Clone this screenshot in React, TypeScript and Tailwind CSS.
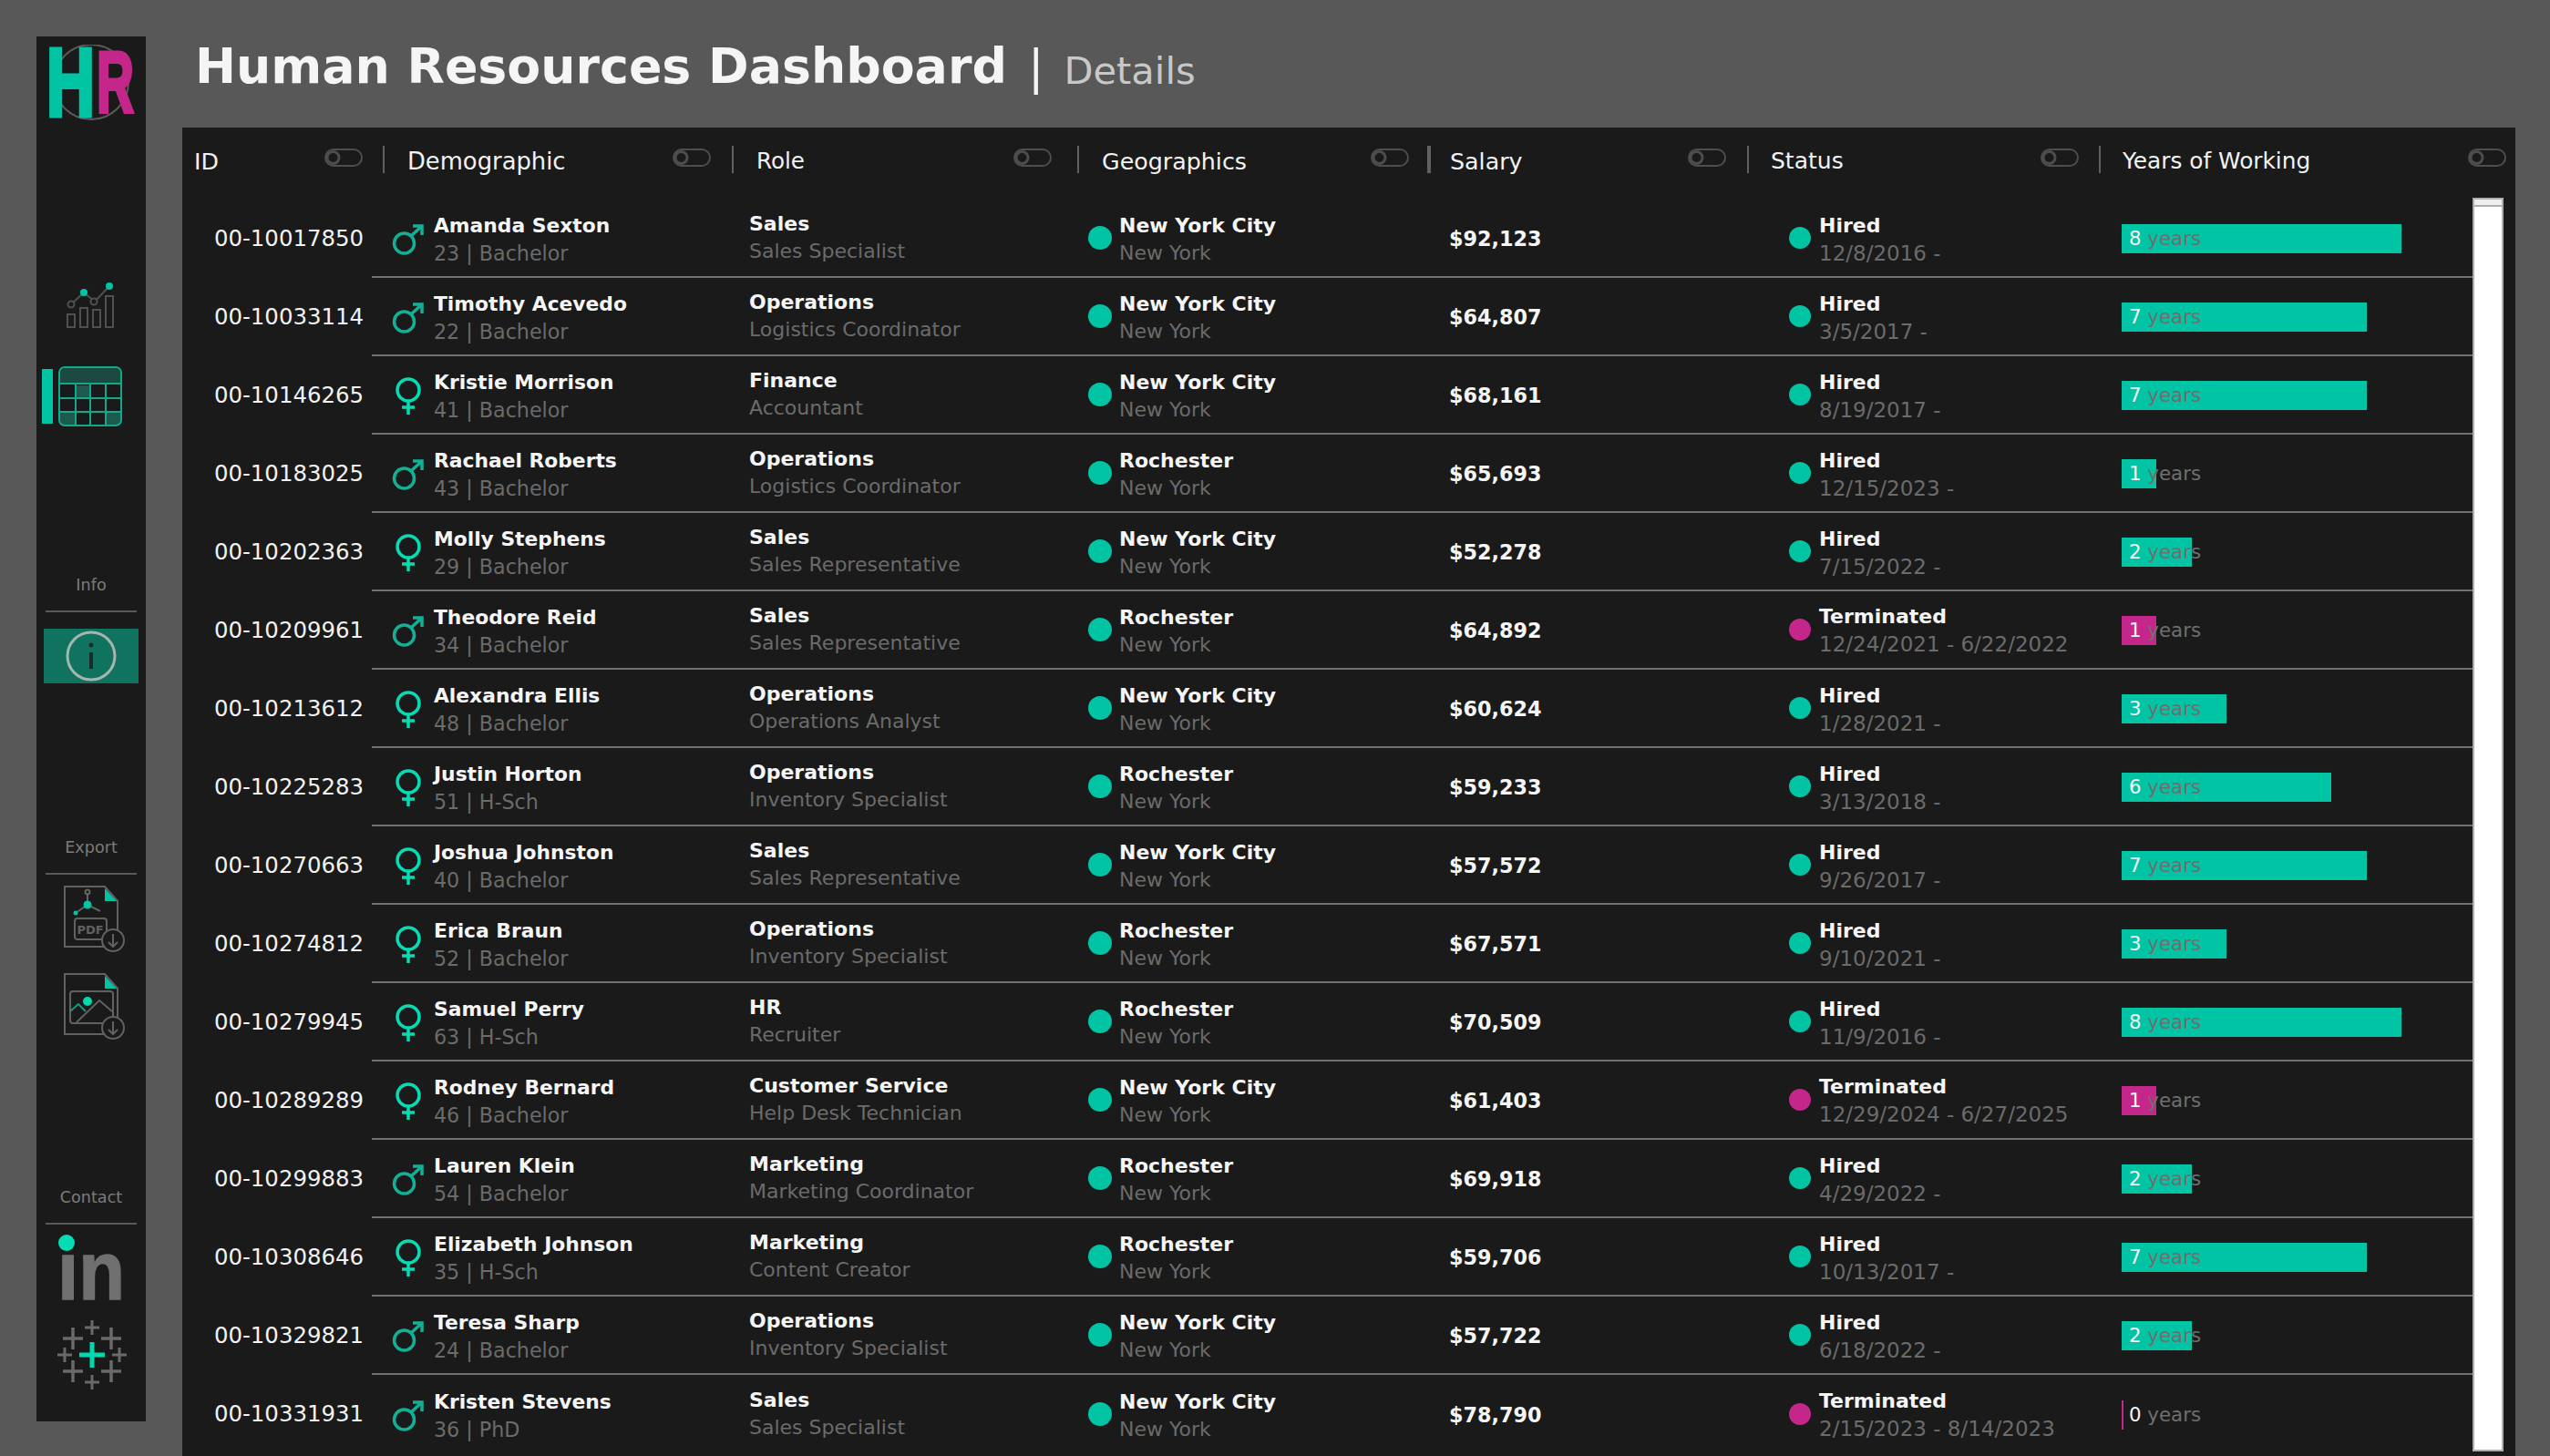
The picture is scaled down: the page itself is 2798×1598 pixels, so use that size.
import React from "react";

type Person = {
  id: string;
  name: string;
  male: boolean;
  age: number;
  edu: string;
  dept: string;
  role: string;
  city: string;
  salary: string;
  status: "Hired" | "Terminated";
  dates: string;
  years: number;
};

const people: Person[] = [
  { id: "00-10017850", name: "Amanda Sexton", male: true, age: 23, edu: "Bachelor", dept: "Sales", role: "Sales Specialist", city: "New York City", salary: "$92,123", status: "Hired", dates: "12/8/2016 -", years: 8 },
  { id: "00-10033114", name: "Timothy Acevedo", male: true, age: 22, edu: "Bachelor", dept: "Operations", role: "Logistics Coordinator", city: "New York City", salary: "$64,807", status: "Hired", dates: "3/5/2017 -", years: 7 },
  { id: "00-10146265", name: "Kristie Morrison", male: false, age: 41, edu: "Bachelor", dept: "Finance", role: "Accountant", city: "New York City", salary: "$68,161", status: "Hired", dates: "8/19/2017 -", years: 7 },
  { id: "00-10183025", name: "Rachael Roberts", male: true, age: 43, edu: "Bachelor", dept: "Operations", role: "Logistics Coordinator", city: "Rochester", salary: "$65,693", status: "Hired", dates: "12/15/2023 -", years: 1 },
  { id: "00-10202363", name: "Molly Stephens", male: false, age: 29, edu: "Bachelor", dept: "Sales", role: "Sales Representative", city: "New York City", salary: "$52,278", status: "Hired", dates: "7/15/2022 -", years: 2 },
  { id: "00-10209961", name: "Theodore Reid", male: true, age: 34, edu: "Bachelor", dept: "Sales", role: "Sales Representative", city: "Rochester", salary: "$64,892", status: "Terminated", dates: "12/24/2021 - 6/22/2022", years: 1 },
  { id: "00-10213612", name: "Alexandra Ellis", male: false, age: 48, edu: "Bachelor", dept: "Operations", role: "Operations Analyst", city: "New York City", salary: "$60,624", status: "Hired", dates: "1/28/2021 -", years: 3 },
  { id: "00-10225283", name: "Justin Horton", male: false, age: 51, edu: "H-Sch", dept: "Operations", role: "Inventory Specialist", city: "Rochester", salary: "$59,233", status: "Hired", dates: "3/13/2018 -", years: 6 },
  { id: "00-10270663", name: "Joshua Johnston", male: false, age: 40, edu: "Bachelor", dept: "Sales", role: "Sales Representative", city: "New York City", salary: "$57,572", status: "Hired", dates: "9/26/2017 -", years: 7 },
  { id: "00-10274812", name: "Erica Braun", male: false, age: 52, edu: "Bachelor", dept: "Operations", role: "Inventory Specialist", city: "Rochester", salary: "$67,571", status: "Hired", dates: "9/10/2021 -", years: 3 },
  { id: "00-10279945", name: "Samuel Perry", male: false, age: 63, edu: "H-Sch", dept: "HR", role: "Recruiter", city: "Rochester", salary: "$70,509", status: "Hired", dates: "11/9/2016 -", years: 8 },
  { id: "00-10289289", name: "Rodney Bernard", male: false, age: 46, edu: "Bachelor", dept: "Customer Service", role: "Help Desk Technician", city: "New York City", salary: "$61,403", status: "Terminated", dates: "12/29/2024 - 6/27/2025", years: 1 },
  { id: "00-10299883", name: "Lauren Klein", male: true, age: 54, edu: "Bachelor", dept: "Marketing", role: "Marketing Coordinator", city: "Rochester", salary: "$69,918", status: "Hired", dates: "4/29/2022 -", years: 2 },
  { id: "00-10308646", name: "Elizabeth Johnson", male: false, age: 35, edu: "H-Sch", dept: "Marketing", role: "Content Creator", city: "Rochester", salary: "$59,706", status: "Hired", dates: "10/13/2017 -", years: 7 },
  { id: "00-10329821", name: "Teresa Sharp", male: true, age: 24, edu: "Bachelor", dept: "Operations", role: "Inventory Specialist", city: "New York City", salary: "$57,722", status: "Hired", dates: "6/18/2022 -", years: 2 },
  { id: "00-10331931", name: "Kristen Stevens", male: true, age: 36, edu: "PhD", dept: "Sales", role: "Sales Specialist", city: "New York City", salary: "$78,790", status: "Terminated", dates: "2/15/2023 - 8/14/2023", years: 0 },
];

const headers = [
  { label: "ID", cell: "w-[220px] pl-[13px] pr-[22px]", line: "", text: "text-[25.33px]" },
  { label: "Demographic", cell: "w-[383px] pl-[25px] pr-[23px]", line: "border-l-2", text: "text-[25.8px]" },
  { label: "Role", cell: "w-[379px] pl-[25px] pr-[28px]", line: "border-l-2", text: "text-[24.6px]" },
  { label: "Geographics", cell: "w-[384px] pl-[25px] pr-[20px]", line: "border-l-2", text: "text-[25.33px]" },
  { label: "Salary", cell: "w-[351px] pl-[21px] pr-[23px]", line: "border-l-4", text: "text-[25.33px]" },
  { label: "Status", cell: "w-[386px] pl-[24px] pr-[22px]", line: "border-l-2", text: "text-[25px]" },
  { label: "Years of Working", cell: "w-[457px] pl-[24px] pr-[10px]", line: "border-l-2", text: "text-[24.8px]" },
];

const Toggle = () => (
  <svg width="42" height="20" viewBox="0 0 42 20" className="mb-[4px] shrink-0" fill="none">
    <rect x="1" y="1" width="40" height="18" rx="9" stroke="#4d4d4d" strokeWidth="2" />
    <circle cx="9.5" cy="10" r="6.5" stroke="#4d4d4d" strokeWidth="3" />
  </svg>
);

const GenderIcon = ({ male }: { male: boolean }) =>
  male ? (
    <svg width="36" height="36" viewBox="0 0 36 36" fill="none" stroke="#13b096" strokeWidth="3.5" className="mt-[4px]">
      <circle cx="13.5" cy="22" r="11" />
      <path d="M21 14 L33 3 M23 3 H33 V13" />
    </svg>
  ) : (
    <svg width="30" height="42" viewBox="0 0 30 42" fill="none" stroke="#06dcb4" strokeWidth="3.5" className="ml-[3px] mt-[4px]">
      <circle cx="15" cy="14" r="12" />
      <path d="M15 26 V41 M8 33 H22" />
    </svg>
  );

const Row = ({ p, last }: { p: Person; last: boolean }) => {
  const bar = p.status === "Hired" ? "bg-[#00c4a3]" : "bg-[#c4268a]";
  return (
    <div className="flex h-[86px]">
      <div className="w-[199px] flex items-center justify-end pt-px text-[24.4px] text-[#f2f2f2]">{p.id}</div>
      <div className="w-[9px]" />
      <div className={`flex flex-1 items-center ${last ? "" : "border-b-2 border-[#707070]"}`}>
        <div className="flex items-center w-[414px] pl-[22px] gap-[10px]">
          <div className="w-[36px]">
            <GenderIcon male={p.male} />
          </div>
          <div className="pt-[4px]">
            <div className="text-[21.8px] leading-[30px] font-bold text-[#f5f5f5]">{p.name}</div>
            <div className="text-[22.2px] leading-[30px] text-[#6b6b6b]">
              {p.age} | {p.edu}
            </div>
          </div>
        </div>
        <div className="w-[372px]">
          <div className="text-[22px] leading-[30px] font-bold text-[#f5f5f5]">{p.dept}</div>
          <div className="text-[22px] leading-[30px] text-[#6b6b6b]">{p.role}</div>
        </div>
        <div className="flex items-center w-[396px] gap-[8px]">
          <div className="size-[26px] rounded-full bg-[#00c4a3]" />
          <div className="pt-[4px]">
            <div className="text-[22px] leading-[30px] font-bold text-[#f5f5f5]">{p.city}</div>
            <div className="text-[22px] leading-[30px] text-[#6b6b6b]">New York</div>
          </div>
        </div>
        <div className="w-[373px] pt-[3px] text-[22.3px] font-bold text-[#f5f5f5]">{p.salary}</div>
        <div className="flex items-center w-[365px] gap-[9px]">
          <div className={`size-[24px] rounded-full ${bar}`} />
          <div className={p.status === "Hired" ? "pt-[4px]" : "pt-[2px]"}>
            <div className="text-[22px] leading-[30px] font-bold text-[#f5f5f5]">{p.status}</div>
            <div className="text-[23px] leading-[30px] text-[#6b6b6b]">{p.dates}</div>
          </div>
        </div>
        <div className={`mt-[2px] h-8 ${bar}`} style={{ width: p.years === 0 ? 2 : Math.round(p.years * 38.4) }}>
          <div className="w-0 pl-[8px] whitespace-nowrap text-[21.33px] leading-[32px] text-[#6f6f6f]">
            <span className="text-[#f5f5f5]">{p.years}</span> years
          </div>
        </div>
      </div>
    </div>
  );
};

const Logo = () => (
  <svg width="100" height="84" viewBox="0 0 100 84" className="ml-[10px] mt-[9px]">
    <circle cx="50" cy="41" r="41" fill="none" stroke="#5a5a5a" strokeWidth="2" />
    <text x="1" y="78" fontFamily="Liberation Sans" fontWeight="700" fontSize="106" fill="#00c4a3" stroke="#00c4a3" strokeWidth="5" textLength="53" lengthAdjust="spacingAndGlyphs">
      H
    </text>
    <text x="56" y="74" fontFamily="Liberation Sans" fontWeight="700" fontSize="94" fill="#c4268a" stroke="#c4268a" strokeWidth="4" textLength="41" lengthAdjust="spacingAndGlyphs">
      R
    </text>
  </svg>
);

const ChartIcon = () => (
  <svg width="54" height="50" viewBox="0 0 54 50" fill="none" className="ml-[32px] mt-[177px]">
    <g stroke="#505050" strokeWidth="2">
      <path d="M2 49 V35 H10 V49 Z M16 49 V28 H24 V49 Z M30 49 V30 H38 V49 Z M44 49 V15 H52 V49 Z" />
      <path d="M6 24 L20 11 L32 21 L48 4" />
      <circle cx="6" cy="24" r="3.5" fill="#1a1a1a" />
      <circle cx="31" cy="21" r="3.5" fill="#1a1a1a" />
    </g>
    <circle cx="20" cy="11" r="4" fill="#00c4a3" />
    <circle cx="48" cy="4" r="4" fill="#00c4a3" />
  </svg>
);

const TableIcon = () => (
  <div className="flex items-center mt-[42px] ml-[6px] gap-[6px]">
    <div className="w-3 h-[60px] bg-[#00c4a3]" />
    <svg width="70" height="66" viewBox="0 0 70 66" fill="none">
      <path d="M2 18 V7 a5 5 0 0 1 5 -5 H63 a5 5 0 0 1 5 5 V18 Z" fill="#1c4a41" />
      <rect x="20" y="21" width="14" height="14" fill="#1d5a4d" />
      <rect x="2" y="50" width="17" height="14" fill="#1d5a4d" />
      <rect x="52" y="50" width="16" height="14" fill="#1d5a4d" />
      <rect x="1" y="1" width="68" height="64" rx="6" stroke="#12a88c" strokeWidth="2" />
      <path d="M1 19 H69 M1 35 H69 M1 50 H69 M19 19 V65 M35 19 V65 M52 19 V65" stroke="#12a88c" strokeWidth="2" />
    </svg>
  </div>
);

const SideLabel = ({ text, mt }: { text: string; mt: string }) => (
  <div className={mt}>
    <div className="text-center text-[17.6px] leading-[20px] text-[#7c7c7c]">{text}</div>
    <div className="mx-[10px] mt-[18px] h-[2px] bg-[#585858]" />
  </div>
);

const PdfIcon = () => (
  <svg width="70" height="76" viewBox="0 0 70 76" fill="none" className="ml-[28px] mt-[10px]" stroke="#616161" strokeWidth="2">
    <path d="M3 3 H47 L61 19 V69 H3 Z" />
    <path d="M47 5 L60 19 H47 Z" fill="#00c4a3" stroke="none" />
    <path d="M28 10 V23 M28 23 L15 32 M28 23 L42 30" />
    <circle cx="28" cy="9" r="2.5" />
    <circle cx="28" cy="23" r="4.5" fill="#00c4a3" stroke="none" />
    <circle cx="15" cy="32" r="2.5" fill="#00c4a3" stroke="none" />
    <rect x="14" y="38" width="35" height="23" rx="3" fill="#1a1a1a" />
    <text x="31" y="55" textAnchor="middle" fontFamily="DejaVu Sans" fontWeight="700" fontSize="13" fill="#616161" stroke="none">
      PDF
    </text>
    <circle cx="56" cy="62" r="12" fill="#1a1a1a" />
    <path d="M56 55 V69 M51 64 L56 69 L61 64" />
  </svg>
);

const ImageIcon = () => (
  <svg width="70" height="76" viewBox="0 0 70 76" fill="none" className="ml-[28px] mt-[20px]" stroke="#616161" strokeWidth="2">
    <path d="M3 3 H47 L61 19 V69 H3 Z" />
    <path d="M47 5 L60 19 H47 Z" fill="#00c4a3" stroke="none" />
    <rect x="9" y="22" width="47" height="35" rx="3" fill="#1a1a1a" />
    <path d="M16 56 L41 32 L55 44" />
    <path d="M9 44 L18 36 L26 44" stroke="#109c84" />
    <circle cx="28" cy="33" r="5" fill="#00d9ae" stroke="none" />
    <circle cx="56" cy="62" r="12" fill="#1a1a1a" />
    <path d="M56 55 V69 M51 64 L56 69 L61 64" />
  </svg>
);

const LinkedIn = () => (
  <svg width="78" height="76" viewBox="0 0 78 76" className="ml-[22px] mt-[10px]">
    <circle cx="11" cy="10" r="9" fill="#06dcb4" />
    <text x="1" y="72" fontFamily="Liberation Sans" fontWeight="700" fontSize="90" fill="#707070" stroke="#707070" strokeWidth="1.5" textLength="74" lengthAdjust="spacingAndGlyphs">
      ın
    </text>
  </svg>
);

const TableauMark = () => (
  <svg width="78" height="78" viewBox="0 0 78 78" fill="none" stroke="#6a6a6a" strokeWidth="3" className="ml-[22px] mt-[18px]">
    <path d="M39 1 V17 M31 9 H47 M39 61 V77 M31 69 H47 M9 31 V47 M1 39 H17 M69 31 V47 M61 39 H77" />
    <path d="M18 9 V33 M7 21 H29 M60 9 V33 M49 21 H71 M18 45 V69 M7 57 H29 M60 45 V69 M49 57 H71" strokeWidth="3.5" />
    <path d="M39 25 V53 M25 39 H53" stroke="#00d9ae" strokeWidth="5" />
  </svg>
);

const Sidebar = () => (
  <div className="ml-10 mt-10 w-[120px] h-[1520px] bg-[#1a1a1a] shrink-0">
    <Logo />
    <ChartIcon />
    <TableIcon />
    <SideLabel text="Info" mt="mt-[164px]" />
    <div className="mx-2 mt-[18px] h-[60px] bg-[#10735f] flex items-center justify-center">
      <svg width="56" height="56" viewBox="0 0 56 56" fill="none">
        <circle cx="28" cy="28" r="26" stroke="#a7b5af" strokeWidth="3" />
        <path d="M28 24 V42" stroke="#1f2a28" strokeWidth="4" />
        <circle cx="28" cy="16" r="2.5" fill="#1f2a28" />
      </svg>
    </div>
    <SideLabel text="Export" mt="mt-[170px]" />
    <PdfIcon />
    <ImageIcon />
    <SideLabel text="Contact" mt="mt-[162px]" />
    <LinkedIn />
    <TableauMark />
  </div>
);

export default function App() {
  return (
    <div className="flex w-[2798px] h-[1598px] overflow-hidden bg-[#585858] font-['DejaVu_Sans',sans-serif]">
      <Sidebar />
      <div className="ml-10 w-[2560px] flex flex-col">
        <div className="h-[140px] flex items-start pl-[14px] pt-[38px] text-[#f5f5f5]">
          <span className="text-[53.76px] leading-[70px] font-bold">Human Resources Dashboard</span>
          <span className="ml-[23px] text-[52px] leading-[70px] font-normal">|</span>
          <span className="ml-[22px] mt-[5px] text-[41.6px] leading-[70px] text-[#c8c8c8]">Details</span>
        </div>
        <div className="flex-1 bg-[#1a1a1a] overflow-hidden">
          <div className="flex h-[77px] items-start pt-[20px]">
            {headers.map((h) => (
              <div key={h.label} className={`${h.cell} ${h.line} border-[#606060] h-[30px] flex items-center justify-between`}>
                <span className={`${h.text} leading-[30px] text-[#f2f2f2] mt-[4px]`}>{h.label}</span>
                <Toggle />
              </div>
            ))}
          </div>
          <div className="flex">
            <div className="w-[2513px] pt-[2px]">
              {people.map((p, i) => (
                <Row key={p.id} p={p} last={i === people.length - 1} />
              ))}
            </div>
            <div className="w-[34px] h-[1376px] border-2 border-[#aeaeae] bg-white">
              <div className="h-[6px] bg-[#efefef] border-b-2 border-[#aeaeae] box-content" />
            </div>
          </div>
        </div>
      </div>
    </div>
  );
}
